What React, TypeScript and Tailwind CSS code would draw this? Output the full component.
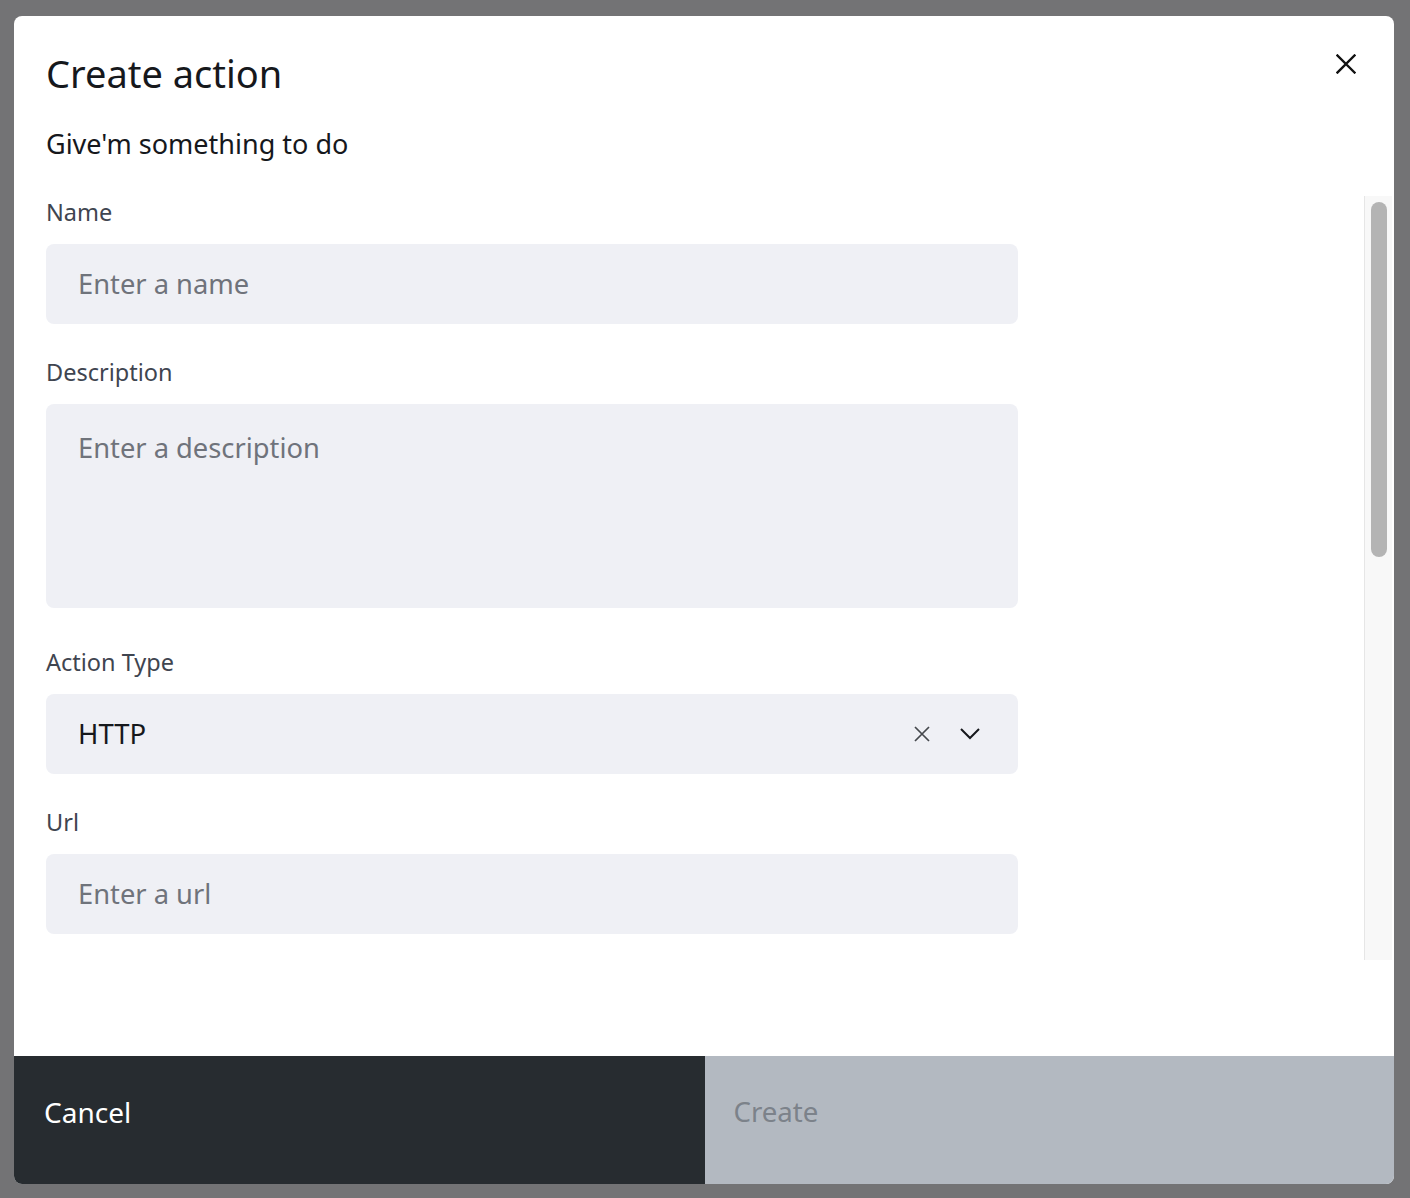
const FONT = { fontFamily: '"Noto Sans", "Open Sans", sans-serif' }

function Label({ children }: { children: string }) {
  return <div className="h-[24px] leading-[24px] text-[23.5px] text-[#3f4550]">{children}</div>
}

function Field({ placeholder }: { placeholder: string }) {
  return (
    <div className="h-[80px] w-[972px] rounded-[8px] bg-[#eff0f5] px-[32px] flex items-center text-[27.3px] text-[#6f737b]">
      {placeholder}
    </div>
  )
}

export default function App() {
  return (
    <div className="min-h-[1198px] w-[1410px] bg-[#737375] pt-[16px] pl-[14px]" style={FONT}>
      <div className="w-[1380px] h-[1168px] bg-white rounded-[8px] flex flex-col overflow-hidden">
        <div className="relative pl-[32px] pt-[33px]">
          <h1 className="h-[48px] leading-[48px] text-[38px] text-[#16181c]">Create action</h1>
          <p className="mt-[31px] h-[32px] leading-[32px] text-[27px] text-[#16181c]">Give'm something to do</p>
          <button className="absolute right-[38px] top-[38px] w-[20px] h-[20px] flex items-center justify-center">
            <svg width="20" height="20" viewBox="0 0 20 20" fill="none" stroke="#111" strokeWidth="2.4" strokeLinecap="square">
              <path d="M1.5 1.5 L18.5 18.5 M18.5 1.5 L1.5 18.5" />
            </svg>
          </button>
        </div>

        <div className="mt-[36px] h-[764px] flex">
          <div className="flex-1 pl-[32px] pt-[4px]">
            <Label>Name</Label>
            <div className="mt-[20px]"><Field placeholder="Enter a name" /></div>

            <div className="mt-[36px]"><Label>Description</Label></div>
            <div className="mt-[20px] h-[204px] w-[972px] rounded-[8px] bg-[#eff0f5] px-[32px] pt-[24px] text-[27.3px] text-[#6f737b]">
              Enter a description
            </div>

            <div className="mt-[42px]"><Label>Action Type</Label></div>
            <div className="mt-[20px] h-[80px] w-[972px] rounded-[8px] bg-[#eff0f5] pl-[32px] pr-[38px] flex items-center">
              <span className="flex-1 text-[27.5px] text-[#16181c]">HTTP</span>
              <svg width="16" height="16" viewBox="0 0 16 16" fill="none" stroke="#45484d" strokeWidth="1.7">
                <path d="M1 1 L15 15 M15 1 L1 15" />
              </svg>
              <svg width="20" height="12" viewBox="0 0 20 12" fill="none" stroke="#16181c" strokeWidth="2" className="ml-[30px]">
                <path d="M1 1 L10 10 L19 1" />
              </svg>
            </div>

            <div className="mt-[36px]"><Label>Url</Label></div>
            <div className="mt-[20px]"><Field placeholder="Enter a url" /></div>
          </div>

          <div className="w-[28px] mr-[2px] bg-[#f8f8f8] border-l border-[#e6e6e6] pt-[6px] flex justify-center">
            <div className="w-[16px] h-[355px] rounded-full bg-[#b4b4b4]" />
          </div>
        </div>

        <div className="mt-auto h-[128px] flex">
          <button className="flex-1 bg-[#272c30] text-white text-left pl-[30px] pb-[16px] text-[28px]">Cancel</button>
          <button className="flex-1 bg-[#b3b9c1] text-[#7c828a] text-left pl-[29px] pb-[16px] text-[27.6px]">Create</button>
        </div>
      </div>
    </div>
  )
}
